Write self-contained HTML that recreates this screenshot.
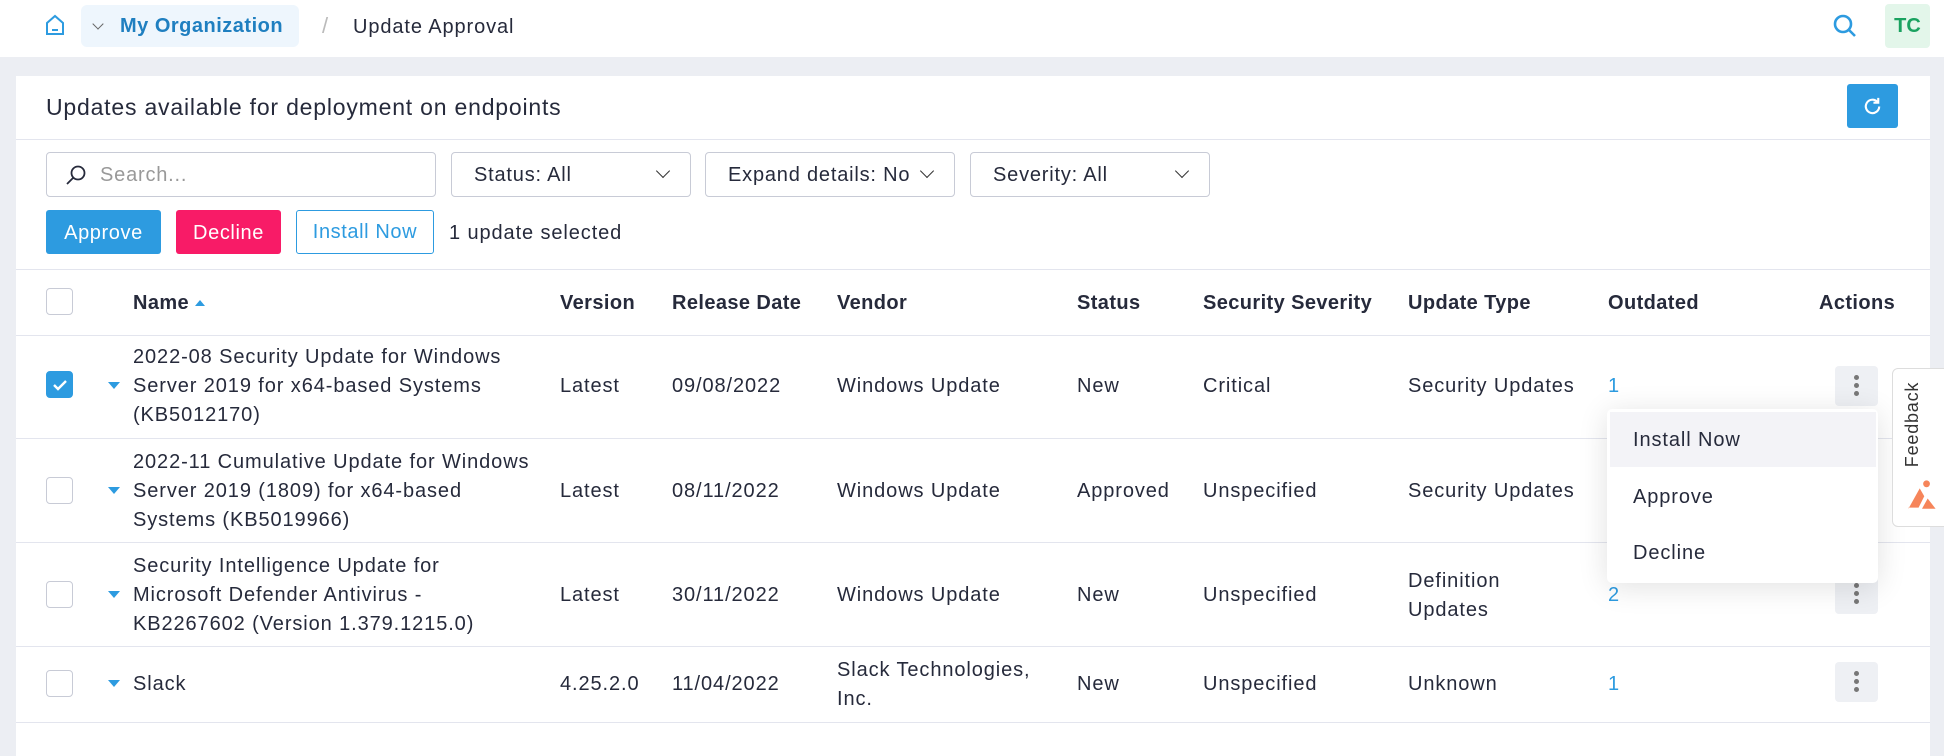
<!DOCTYPE html>
<html><head><meta charset="utf-8"><style>
*{box-sizing:border-box;margin:0;padding:0}
body{width:1944px;height:738px;overflow:hidden;background:#eceef3;font-family:"Liberation Sans",sans-serif;color:#262a3b;position:relative}
.abs{position:absolute}
.hdr{left:0;top:0;width:1944px;height:57px;background:#fff}
.card{left:16px;top:76px;width:1914px;height:680px;background:#fff}
.t{position:absolute;font-size:20px;letter-spacing:0.9px;white-space:nowrap;margin-top:2px}
.th{position:absolute;font-size:20px;letter-spacing:0.4px;font-weight:bold;top:292px}
.line{position:absolute;left:16px;width:1914px;height:1px;background:#e3e5ee}
.cb{position:absolute;left:46px;width:27px;height:27px;border:1.5px solid #c8cbd6;border-radius:4px;background:#fff}
.arr{position:absolute;left:108px;width:0;height:0;border-left:6px solid transparent;border-right:6px solid transparent;border-top:7px solid #2d9be0}
.sel{position:absolute;top:152px;height:45px;border:1.5px solid #c8cbd6;border-radius:4px;font-size:20px;letter-spacing:0.8px;padding:11px 22px}
.chev{position:absolute;right:22px;top:13px;width:10px;height:10px;border-right:1.5px solid #333;border-bottom:1.5px solid #333;transform:rotate(45deg)}
.btn{position:absolute;top:210px;height:44px;border-radius:3px;font-size:20px;letter-spacing:0.6px;text-align:center;line-height:46px}
.keb{position:absolute;left:1835px;width:43px;height:40px;background:#eef0f4;border-radius:4px}
.keb i{position:absolute;left:19px;width:5px;height:5px;border-radius:50%;background:#777}
.ln{line-height:29px}
</style></head><body>
<div class="abs hdr"></div>
<svg class="abs" style="left:44px;top:14px" width="22" height="22" viewBox="0 0 22 22"><path d="M3 20V9L11 2L19 9V20Z" fill="none" stroke="#2d9be0" stroke-width="2"/><path d="M8 16h6" stroke="#2d9be0" stroke-width="2"/></svg>
<div class="abs" style="left:81px;top:5px;width:218px;height:42px;background:#eef6fd;border-radius:6px"></div>
<div class="abs" style="left:94px;top:20px;width:8px;height:8px;border-right:1.3px solid #666;border-bottom:1.3px solid #666;transform:rotate(45deg)"></div>
<div class="t" style="left:120px;top:13px;font-weight:bold;color:#1f7fc0;font-size:20px;letter-spacing:0.5px">My Organization</div>
<div class="t" style="left:322px;top:11px;color:#bbb;font-size:22px">/</div>
<div class="t" style="left:353px;top:14px">Update Approval</div>
<svg class="abs" style="left:1831px;top:12px" width="28" height="28" viewBox="0 0 28 28"><circle cx="12" cy="12" r="8" fill="none" stroke="#2d9be0" stroke-width="2.6"/><path d="M18 18l6 6" stroke="#2d9be0" stroke-width="2.6"/></svg>
<div class="abs" style="left:1885px;top:4px;width:45px;height:44px;background:#e3f6ea;border-radius:4px;color:#1aa260;font-weight:bold;font-size:20px;text-align:center;line-height:44px">TC</div>

<div class="abs card"></div>
<div class="t" style="left:46px;top:92px;font-size:23px;letter-spacing:0.8px">Updates available for deployment on endpoints</div>
<div class="abs" style="left:1847px;top:84px;width:51px;height:44px;background:#2d9be0;border-radius:3px"></div>
<svg class="abs" style="left:1861px;top:95px" width="23" height="23" viewBox="0 0 24 24"><path d="M19 12a7 7 0 1 1-2-5" fill="none" stroke="#fff" stroke-width="2.2"/><path d="M18 3v5h-5" fill="none" stroke="#fff" stroke-width="2.2"/></svg>
<div class="line" style="top:139px"></div>

<div class="sel" style="left:46px;width:390px;color:#999;padding-left:53px">Search...</div>
<svg class="abs" style="left:65px;top:164px" width="22" height="22" viewBox="0 0 22 22"><circle cx="13" cy="9" r="6.5" fill="none" stroke="#262a3b" stroke-width="1.8"/><path d="M8.5 13.5L2 20" stroke="#262a3b" stroke-width="1.8"/></svg>
<div class="sel" style="left:451px;width:240px">Status: All<span class="chev"></span></div>
<div class="sel" style="left:705px;width:250px">Expand details: No<span class="chev"></span></div>
<div class="sel" style="left:970px;width:240px">Severity: All<span class="chev"></span></div>

<div class="btn" style="left:46px;width:115px;background:#2d9be0;color:#fff">Approve</div>
<div class="btn" style="left:176px;width:105px;background:#f81b67;color:#fff">Decline</div>
<div class="btn" style="left:296px;width:138px;border:1.5px solid #2d9be0;color:#2d9be0;line-height:43px">Install Now</div>
<div class="t" style="left:449px;top:220px">1 update selected</div>
<div class="line" style="top:269px"></div>

<div class="cb" style="top:288px"></div>
<div class="th" style="left:133px">Name <span style="display:inline-block;border-left:5px solid transparent;border-right:5px solid transparent;border-bottom:6px solid #2d9be0;vertical-align:3px"></span></div>
<div class="th" style="left:560px">Version</div>
<div class="th" style="left:672px">Release Date</div>
<div class="th" style="left:837px">Vendor</div>
<div class="th" style="left:1077px">Status</div>
<div class="th" style="left:1203px">Security Severity</div>
<div class="th" style="left:1408px">Update Type</div>
<div class="th" style="left:1608px">Outdated</div>
<div class="th" style="left:1819px">Actions</div>
<div class="line" style="top:335px"></div>

<!-- row1 -->
<div class="cb" style="top:371px;background:#2d9be0;border-color:#2d9be0"></div>
<svg class="abs" style="left:51px;top:376px" width="18" height="18" viewBox="0 0 18 18"><path d="M3 9l4 4 8-8" fill="none" stroke="#fff" stroke-width="2.4"/></svg>
<div class="arr" style="top:382px"></div>
<div class="t ln" style="left:133px;top:341px">2022-08 Security Update for Windows<br>Server 2019 for x64-based Systems<br>(KB5012170)</div>
<div class="t" style="left:560px;top:373px">Latest</div>
<div class="t" style="left:672px;top:373px">09/08/2022</div>
<div class="t" style="left:837px;top:373px">Windows Update</div>
<div class="t" style="left:1077px;top:373px">New</div>
<div class="t" style="left:1203px;top:373px">Critical</div>
<div class="t" style="left:1408px;top:373px">Security Updates</div>
<div class="t" style="left:1608px;top:373px;color:#2d9be0">1</div>
<div class="keb" style="top:366px"><i style="top:9px"></i><i style="top:17px"></i><i style="top:25px"></i></div>
<div class="line" style="top:438px"></div>

<!-- row2 -->
<div class="cb" style="top:477px"></div>
<div class="arr" style="top:487px"></div>
<div class="t ln" style="left:133px;top:446px">2022-11 Cumulative Update for Windows<br>Server 2019 (1809) for x64-based<br>Systems (KB5019966)</div>
<div class="t" style="left:560px;top:478px">Latest</div>
<div class="t" style="left:672px;top:478px">08/11/2022</div>
<div class="t" style="left:837px;top:478px">Windows Update</div>
<div class="t" style="left:1077px;top:478px">Approved</div>
<div class="t" style="left:1203px;top:478px">Unspecified</div>
<div class="t" style="left:1408px;top:478px">Security Updates</div>
<div class="line" style="top:542px"></div>

<!-- row3 -->
<div class="cb" style="top:581px"></div>
<div class="arr" style="top:591px"></div>
<div class="t ln" style="left:133px;top:550px">Security Intelligence Update for<br>Microsoft Defender Antivirus -<br>KB2267602 (Version 1.379.1215.0)</div>
<div class="t" style="left:560px;top:582px">Latest</div>
<div class="t" style="left:672px;top:582px">30/11/2022</div>
<div class="t" style="left:837px;top:582px">Windows Update</div>
<div class="t" style="left:1077px;top:582px">New</div>
<div class="t" style="left:1203px;top:582px">Unspecified</div>
<div class="t ln" style="left:1408px;top:565px">Definition<br>Updates</div>
<div class="t" style="left:1608px;top:582px;color:#2d9be0">2</div>
<div class="keb" style="top:574px"><i style="top:9px"></i><i style="top:17px"></i><i style="top:25px"></i></div>
<div class="line" style="top:646px"></div>

<!-- row4 -->
<div class="cb" style="top:670px"></div>
<div class="arr" style="top:680px"></div>
<div class="t" style="left:133px;top:671px">Slack</div>
<div class="t" style="left:560px;top:671px">4.25.2.0</div>
<div class="t" style="left:672px;top:671px">11/04/2022</div>
<div class="t ln" style="left:837px;top:654px">Slack Technologies,<br>Inc.</div>
<div class="t" style="left:1077px;top:671px">New</div>
<div class="t" style="left:1203px;top:671px">Unspecified</div>
<div class="t" style="left:1408px;top:671px">Unknown</div>
<div class="t" style="left:1608px;top:671px;color:#2d9be0">1</div>
<div class="keb" style="top:662px"><i style="top:9px"></i><i style="top:17px"></i><i style="top:25px"></i></div>
<div class="line" style="top:722px"></div>

<!-- dropdown -->
<div class="abs" style="left:1607px;top:409px;width:271px;height:174px;background:#fff;border-radius:5px;box-shadow:0 4px 30px rgba(0,0,0,0.12)"></div>
<div class="abs" style="left:1610px;top:412px;width:266px;height:55px;background:#f3f3f7"></div>
<div class="t" style="left:1633px;top:427px">Install Now</div>
<div class="t" style="left:1633px;top:484px">Approve</div>
<div class="t" style="left:1633px;top:540px">Decline</div>

<!-- feedback -->
<div class="abs" style="left:1892px;top:368px;width:60px;height:159px;background:#fff;border:1.5px solid #ddd;border-radius:6px"></div>
<div class="t" style="left:1870px;top:412px;transform:rotate(-90deg);font-size:18px;letter-spacing:0.8px;color:#333">Feedback</div>
<svg class="abs" style="left:1905px;top:477px" width="34" height="34" viewBox="0 0 30 30"><path d="M3 28L13 10l4 7-5 10h-9zM15 28l5-9 7 9z" fill="#f6855a"/><circle cx="19" cy="6" r="3" fill="#f6855a"/></svg>
</body></html>
